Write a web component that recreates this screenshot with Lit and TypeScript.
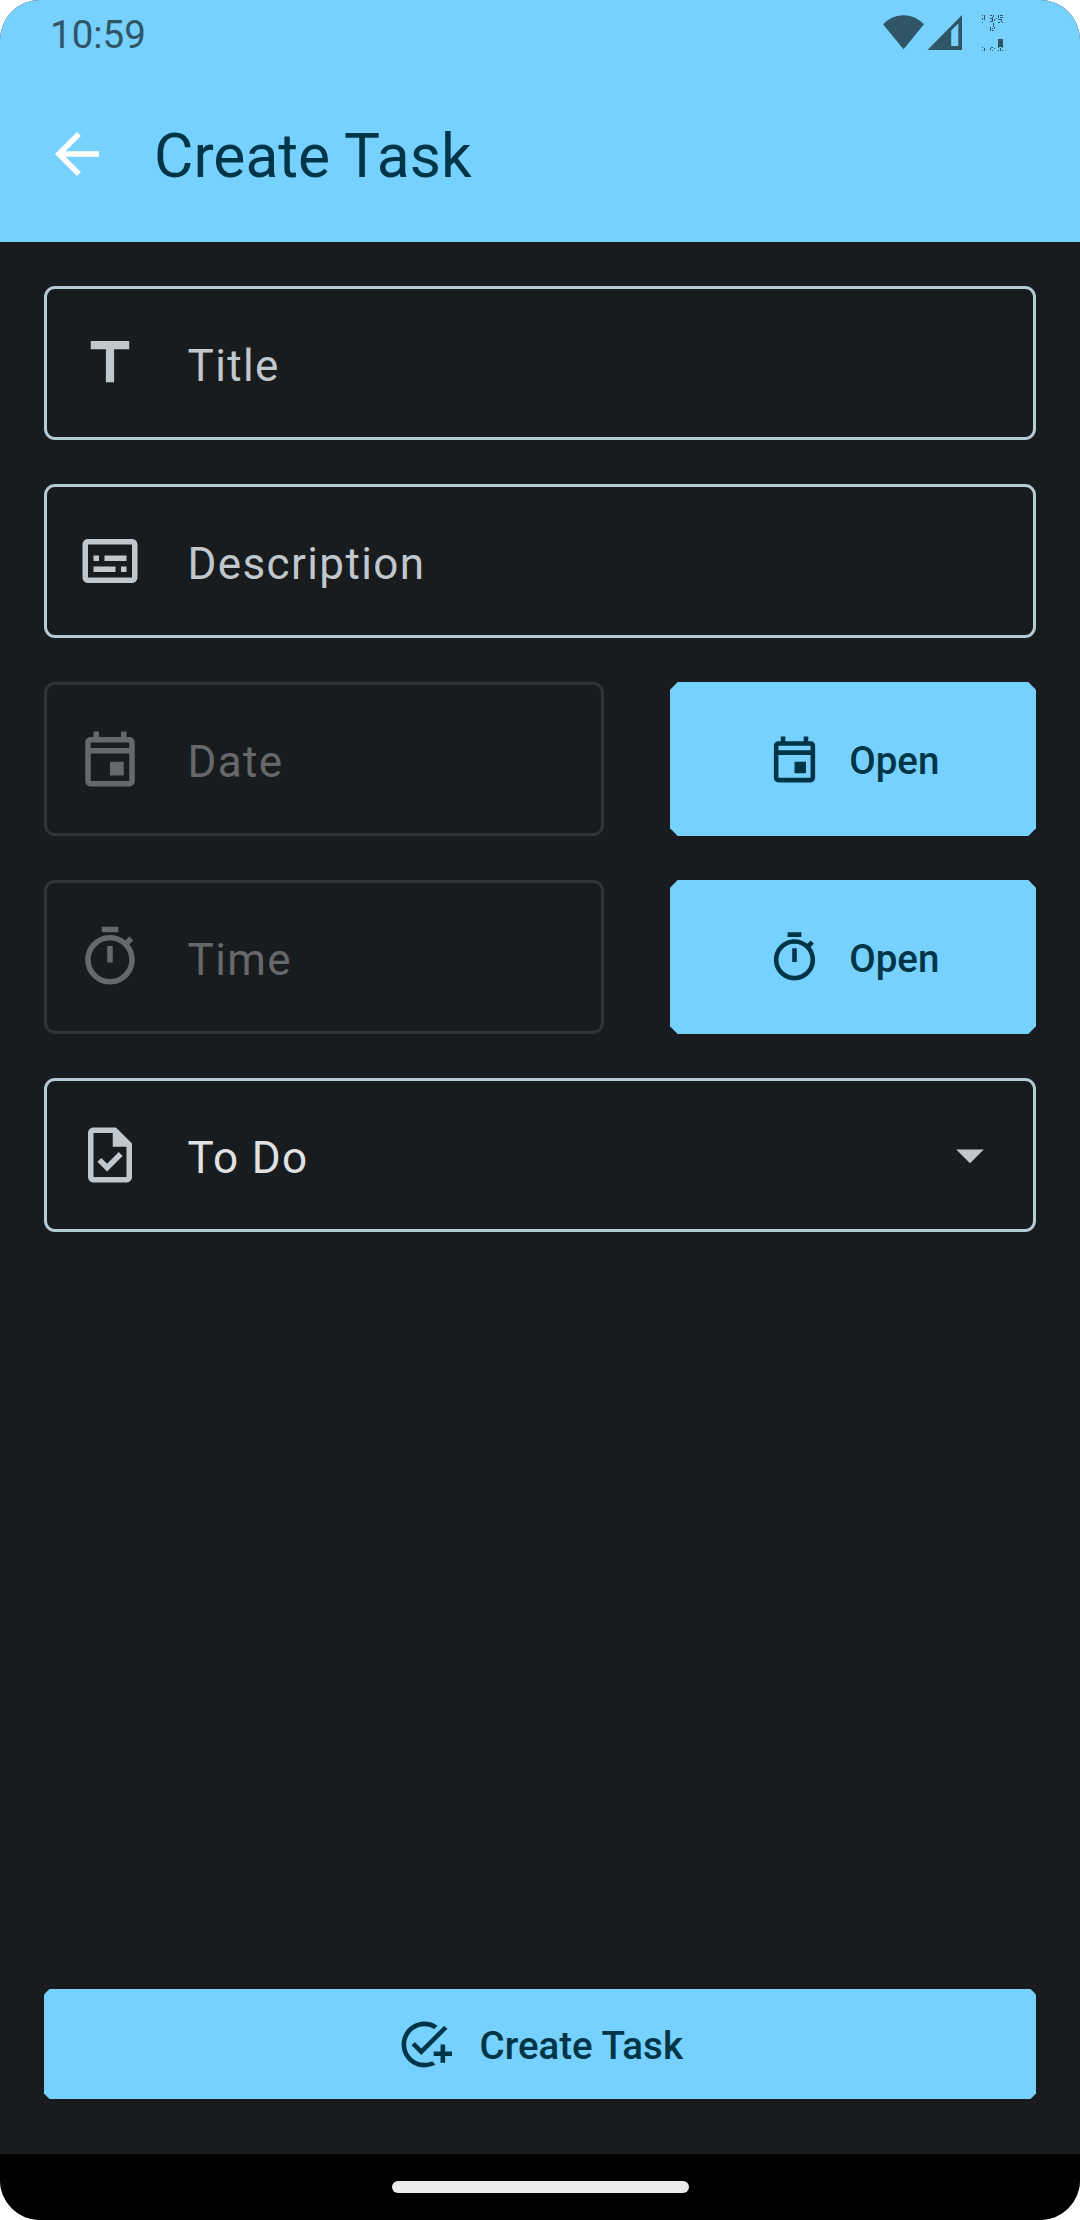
import { LitElement, html, svg, css, nothing } from "lit";
import { customElement, property } from "lit/decorators.js";

const ICONS: Record<string, string> = {
  back: "M20 11H7.83l5.59-5.59L12 4l-8 8 8 8 1.41-1.41L7.83 13H20v-2z",
  title: "M5 4v3h5.5v12h3V7H19V4z",
  subtitles:
    "M20 4H4c-1.1 0-2 .9-2 2v12c0 1.1.9 2 2 2h16c1.1 0 2-.9 2-2V6c0-1.1-.9-2-2-2zm0 14H4V6h16v12zM6 10h2v2H6zm0 4h8v2H6zm10 0h2v2h-2zm-6-4h8v2h-8z",
  event:
    "M19 4h-1V2h-2v2H8V2H6v2H5c-1.11 0-1.99.9-1.99 2L3 20c0 1.1.89 2 2 2h14c1.1 0 2-.9 2-2V6c0-1.1-.9-2-2-2zm0 16H5V10h14v10zm0-12H5V6h14v2zm-7 5h5v5h-5z",
  timer:
    "M15 1H9v2h6V1zm-4 13h2V8h-2v6zm8.03-6.61l1.42-1.42c-.43-.51-.9-.99-1.41-1.41l-1.42 1.42C16.07 4.74 14.12 4 12 4c-4.97 0-9 4.03-9 9s4.02 9 9 9 9-4.03 9-9c0-2.12-.74-4.07-1.97-5.61zM12 20c-3.87 0-7-3.13-7-7s3.13-7 7-7 7 3.13 7 7-3.13 7-7 7z",
  task:
    "M14.17 2H6c-1.1 0-2 .9-2 2v16c0 1.1.9 2 2 2h12c1.1 0 2-.9 2-2V7.83L14.17 2zM18 20H6V4h7v5h5v11zM8.82 13.05L7.4 14.46 10.94 18l5.66-5.66-1.41-1.41-4.24 4.24-2.13-2.12z",
  dropdown: "M7 10l5 5 5-5z",
  addTask:
    "M22 5.18L10.59 16.6l-4.24-4.24 1.41-1.41 2.83 2.83 10-10L22 5.18zM12 20c-4.42 0-8-3.58-8-8s3.58-8 8-8c1.57 0 3.04.46 4.28 1.25l1.45-1.45C16.1 2.67 14.13 2 12 2 6.48 2 2 6.48 2 12s4.48 10 10 10c1.73 0 3.36-.44 4.78-1.22l-1.5-1.5c-1 .46-2.11.72-3.28.72zm7-5h-3v2h3v3h2v-3h3v-2h-3v-3h-2v3z",
};

@customElement("md-icon")
export class MdIcon extends LitElement {
  @property() name = "";

  static styles = css`
    :host {
      display: block;
      width: 66px;
      height: 66px;
      flex: none;
    }
    .glyph {
      display: block;
      width: 100%;
      height: 100%;
      fill: currentColor;
    }
  `;

  render() {
    return html`<svg class="glyph" viewBox="0 0 24 24">
      ${svg`<path d=${ICONS[this.name] ?? ""}></path>`}
    </svg>`;
  }
}

@customElement("outlined-field")
export class OutlinedField extends LitElement {
  @property() icon = "";
  @property() label = "";
  @property() value = "";
  @property({ type: Boolean, reflect: true }) disabled = false;
  @property({ type: Boolean }) menu = false;

  static styles = css`
    :host {
      display: block;
      flex: 1;
      min-width: 0;
    }
    .box {
      box-sizing: border-box;
      height: 154px;
      display: flex;
      align-items: center;
      gap: 44.5px;
      padding: 0 30px;
      border: 3px solid #b4cad6;
      border-radius: 11px;
      color: #c0c7cd;
    }
    .text {
      flex: 1;
      padding-top: 6px;
      font-size: 44px;
      line-height: 66px;
      letter-spacing: 1.375px;
    }
    .filled {
      color: #e1e2e4;
    }
    :host([disabled]) .box {
      border-color: #313435;
      color: #66696c;
    }
    :host([disabled]) .text {
      color: #67686b;
    }
  `;

  render() {
    return html`<div class="box">
      <md-icon name=${this.icon}></md-icon>
      <span class="text ${this.value ? "filled" : ""}">${this.value || this.label}</span>
      ${this.menu ? html`<md-icon name="dropdown"></md-icon>` : nothing}
    </div>`;
  }
}

@customElement("cut-button")
export class CutButton extends LitElement {
  @property() icon = "";
  @property() label = "";

  static styles = css`
    :host {
      display: block;
      height: 110px;
      --cut: 5.5px;
    }
    .button {
      width: 100%;
      height: 100%;
      margin: 0;
      padding: 0;
      border: 0;
      display: flex;
      align-items: center;
      justify-content: center;
      gap: 27.5px;
      font-family: inherit;
      background: #76d1ff;
      color: #003548;
      clip-path: polygon(
        var(--cut) 0,
        calc(100% - var(--cut)) 0,
        100% var(--cut),
        100% calc(100% - var(--cut)),
        calc(100% - var(--cut)) 100%,
        var(--cut) 100%,
        0 calc(100% - var(--cut)),
        0 var(--cut)
      );
    }
    .icon {
      width: 55px;
      height: 55px;
    }
    .label {
      padding-top: 3px;
      font-size: 38.5px;
      font-weight: 500;
      line-height: 55px;
    }
  `;

  render() {
    return html`<button class="button">
      <md-icon class="icon" name=${this.icon}></md-icon>
      <span class="label">${this.label}</span>
    </button>`;
  }
}

@customElement("app-root")
export class AppRoot extends LitElement {
  static styles = css`
    :host {
      display: block;
      font-family: Roboto, "Noto Sans", sans-serif;
    }
    .screen {
      height: 2220px;
      display: flex;
      flex-direction: column;
      overflow: hidden;
      border-radius: 40px;
      background: #191c1e;
    }
    .top {
      height: 242px;
      flex: none;
      background: #76d1ff;
    }
    .status {
      box-sizing: border-box;
      height: 66px;
      display: flex;
      justify-content: space-between;
      padding: 0 76px 0 50px;
      color: #2f5566;
    }
    .clock {
      padding-top: 2px;
      font-size: 38.5px;
      line-height: 66px;
    }
    .indicators {
      width: 122px;
      height: 66px;
      fill: currentColor;
    }
    .toolbar {
      height: 176px;
      display: flex;
      align-items: center;
      gap: 44px;
      padding-left: 44px;
      color: #fff;
    }
    .heading {
      margin: 0;
      padding-top: 4px;
      font-size: 60.5px;
      font-weight: 400;
      line-height: 77px;
      color: #003548;
    }
    .form {
      flex: 1;
      display: flex;
      flex-direction: column;
      gap: 44px;
      padding: 44px 44px 55px;
    }
    .line {
      display: flex;
      gap: 66px;
    }
    .open {
      width: 366px;
      height: 154px;
      --cut: 7.7px;
    }
    .submit {
      margin-top: auto;
    }
    .nav {
      height: 66px;
      flex: none;
      display: flex;
      align-items: center;
      justify-content: center;
      background: #000;
    }
    .handle {
      width: 297px;
      height: 11.5px;
      border-radius: 6px;
      background: #ebebeb;
    }
  `;

  render() {
    return html`<div class="screen">
      <header class="top">
        <div class="status">
          <span class="clock">10:59</span>
          <svg class="indicators" viewBox="882 0 122 66">
            <path d="M903.5 49.3L883 24.3C888 19 895 15.2 903.5 15.2S919 19 924 24.3z"></path>
            <path
              fill-rule="evenodd"
              d="M927.5 50L962 15v35zM951.2 46h7.1V23.4l-7.1 7.2z"
            ></path>
            <path
              d="M982 15h1v1h-1zM982 18h1v2h-1zM984 15h1v5h-1zM982 22h1v1h-1zM990 15h2v1h-2zM993 15h1v2h-1zM990 18h2v1h-2zM992 17h1v5h-1zM994 19h1v2h-1zM990 21h3v1h-3zM993 23h1v4h-1zM990 27h1v4h-1zM992 28h1v1h-1zM994 27h1v2h-1zM992 30h2v1h-2zM996 18h1v1h-1zM998 15h1v3h-1zM1000 15h3v1h-3zM1000 17h3v1h-3zM998 19h4v1h-4zM1001 20h1v2h-1zM998 22h2v1h-2zM1002 22h1v1h-1zM982 47h1v1h-1zM984 48h1v3h-1zM982 50h1v1h-1zM990 48h1v2h-1zM991 47h2v1h-2zM992 50h1v1h-1zM994 48h1v1h-1zM998 47h1v1h-1zM1000 48h1v3h-1zM1002 47h1v1h-1zM1002 50h1v1h-1zM998 50h1v1h-1zM998 39h5v8h-5z"
            ></path>
          </svg>
        </div>
        <div class="toolbar">
          <md-icon name="back"></md-icon>
          <h1 class="heading">Create Task</h1>
        </div>
      </header>
      <main class="form">
        <div class="line"><outlined-field icon="title" label="Title"></outlined-field></div>
        <div class="line">
          <outlined-field icon="subtitles" label="Description"></outlined-field>
        </div>
        <div class="line">
          <outlined-field icon="event" label="Date" disabled></outlined-field>
          <cut-button class="open" icon="event" label="Open"></cut-button>
        </div>
        <div class="line">
          <outlined-field icon="timer" label="Time" disabled></outlined-field>
          <cut-button class="open" icon="timer" label="Open"></cut-button>
        </div>
        <div class="line">
          <outlined-field icon="task" label="Status" value="To Do" menu></outlined-field>
        </div>
        <cut-button class="submit" icon="addTask" label="Create Task"></cut-button>
      </main>
      <footer class="nav"><div class="handle"></div></footer>
    </div>`;
  }
}
